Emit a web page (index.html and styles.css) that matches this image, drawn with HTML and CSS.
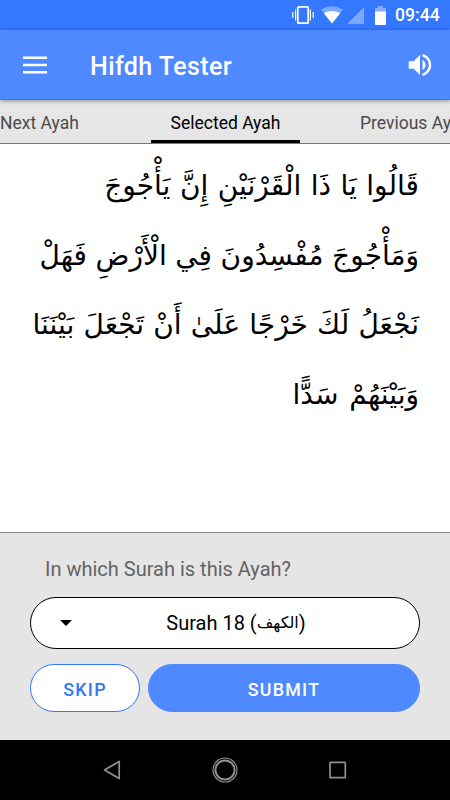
FILE: index.html
```html
<!DOCTYPE html>
<html lang="en">
<head>
    <meta charset="UTF-8">
    <meta name="viewport" content="width=device-width, initial-scale=1.0">
    <title>Hifdh Tester</title>
    <link rel="stylesheet" href="styles.css">
</head>
<body>
    <div class="status-bar">
        <svg class="vibrate" width="22" height="20" viewBox="0 0 22 20" fill="none" stroke="#fff">
            <rect x="5.8" y="1.8" width="10.4" height="16.4" rx="1" stroke-width="1.7"/>
            <path d="M3.6 4.5v11M18.4 4.5v11" stroke-width="1.2"/>
            <path d="M.8 7v6M21.2 7v6" stroke-width="1.2"/>
        </svg>
        <svg class="wifi" width="22" height="18" viewBox="0 0 22 18" fill="#fff">
            <path d="M0 3.5Q11-3 22 3.5L11 17.5z" opacity=".35"/>
            <path d="M2.8 7.3Q11 2.5 19.2 7.3L11 17.5z"/>
        </svg>
        <svg class="signal" width="17" height="17" viewBox="0 0 17 17" fill="#fff">
            <path d="M17 0v17H0z" opacity=".35"/>
        </svg>
        <svg class="battery" width="11" height="19" viewBox="0 0 11 19" fill="#fff">
            <path d="M3 0h5v2h3v4H0V2h3z" opacity=".4"/>
            <path d="M0 5.5h11V18a1 1 0 0 1-1 1H1a1 1 0 0 1-1-1z"/>
        </svg>
        <span class="clock">09:44</span>
    </div>

    <header class="toolbar">
        <svg width="24" height="18" viewBox="0 0 24 18" fill="#fff">
            <path d="M0 .5h24V3H0zM0 7.7h24v2.5H0zM0 14.9h24v2.5H0z"/>
        </svg>
        <h1>Hifdh Tester</h1>
        <svg class="volume" width="30" height="30" viewBox="0 0 24 24" fill="#fff">
            <path d="M3 9v6h4l5 5V4L7 9H3zm13.5 3c0-1.77-1.02-3.29-2.5-4.03v8.05c1.48-.73 2.5-2.25 2.5-4.02zM14 3.23v2.06c2.89.86 5 3.54 5 6.71s-2.11 5.85-5 6.71v2.06c4.01-.91 7-4.49 7-8.77s-2.99-7.86-7-8.77z"/>
        </svg>
    </header>

    <nav class="tabs">
        <a class="tab tab-next">Next Ayah</a>
        <a class="tab tab-selected">Selected Ayah</a>
        <a class="tab tab-previous">Previous Ayah</a>
    </nav>

    <main class="ayah" lang="ar" dir="rtl">
        <span class="line line-1">قَالُوا يَا ذَا الْقَرْنَيْنِ إِنَّ يَأْجُوجَ</span>
        <span class="line line-2">وَمَأْجُوجَ مُفْسِدُونَ فِي الْأَرْضِ فَهَلْ</span>
        <span class="line line-3">نَجْعَلُ لَكَ خَرْجًا عَلَىٰ أَنْ تَجْعَلَ بَيْنَنَا</span>
        <span class="line line-4">وَبَيْنَهُمْ سَدًّا</span>
    </main>

    <section class="question">
        <label>In which Surah is this Ayah?</label>
        <div class="select">
            <svg width="12" height="6" viewBox="0 0 12 6"><path d="M0 0h12L6 6z"/></svg>
            <span class="value">Surah 18 (<span class="surah-name" lang="ar">الكهف</span>)</span>
        </div>
        <div class="buttons">
            <button class="skip">SKIP</button>
            <button class="submit">SUBMIT</button>
        </div>
    </section>

    <footer class="nav-bar">
        <svg width="26" height="26" viewBox="0 0 26 26" fill="none" stroke="#909090" stroke-width="1.7" stroke-linejoin="round">
            <path d="M5.5 13L20.2 4.4v17.2z"/>
        </svg>
        <svg width="26" height="26" viewBox="0 0 26 26" fill="none" stroke="#909090">
            <circle cx="13" cy="13" r="12" stroke-width="1.2"/>
            <circle cx="13" cy="13" r="9.6" stroke-width="2"/>
        </svg>
        <svg width="26" height="26" viewBox="0 0 26 26" fill="none" stroke="#909090" stroke-width="1.7">
            <rect x="5" y="5.4" width="15.3" height="15.3" rx=".5"/>
        </svg>
    </footer>
</body>
</html>
```

FILE: styles.css
```css
* {
    box-sizing: border-box;
}
body {
    width: 450px;
    height: 800px;
    margin: 0;
    overflow: hidden;
    display: flex;
    flex-direction: column;
    font-family: Roboto, sans-serif;
    background: white;
}
.status-bar {
    height: 30px;
    display: flex;
    align-items: center;
    justify-content: flex-end;
    padding-right: 10px;
    background: #3478ff;
    color: white;
}
.wifi {
    margin-left: 7px;
}
.signal {
    margin-left: 4px;
}
.battery {
    margin-left: 11px;
}
.clock {
    width: 45px;
    margin-left: 9px;
    font-size: 17.6px;
    font-weight: 500;
}
.toolbar {
    position: relative;
    height: 70px;
    display: flex;
    align-items: center;
    padding: 0 15px 0 23px;
    background: #4e89ff;
    border-bottom: 1px solid #3b7af5;
    box-shadow: 0 1px 4px rgba(0, 0, 0, 0.4);
}
h1 {
    flex: 1;
    margin: 3px 0 0 43px;
    color: white;
    font-size: 25px;
    font-weight: 500;
    letter-spacing: 0.4px;
}
.tabs {
    height: 44px;
    display: grid;
    grid-template-columns: 151px 149px 150px;
    overflow: hidden;
    background: #e6e6e6;
    border-bottom: 1px solid #777;
}
.tab {
    height: 43px;
    line-height: 46px;
    font-size: 17.5px;
    white-space: nowrap;
    color: #4b4b4b;
}
.tab-selected {
    color: black;
    text-align: center;
    border-bottom: 3px solid black;
}
.tab-previous {
    padding-left: 60px;
    overflow: hidden;
}
.ayah {
    height: 388px;
    padding: 7px 31px 0 20px;
    font-family: "DejaVu Sans", sans-serif;
    font-size: 28px;
    color: black;
}
.line {
    display: block;
    height: 69.7px;
    line-height: 70px;
    white-space: nowrap;
}
.line-1 {
    word-spacing: 0.6px;
}
.line-2 {
    word-spacing: -0.3px;
}
.line-3 {
    word-spacing: 0.3px;
}
.line-4 {
    word-spacing: 2px;
}
.question {
    height: 208px;
    padding: 22px 30px 0;
    background: #e5e5e5;
    border-top: 1px solid #858585;
}
label {
    display: block;
    height: 28px;
    margin-left: 15px;
    line-height: 28px;
    font-size: 20px;
    color: #636363;
}
.select {
    height: 52px;
    margin-top: 14px;
    display: flex;
    align-items: center;
    padding: 0 29px;
    background: white;
    border: 1px solid black;
    border-radius: 26px;
}
.value {
    flex: 1;
    padding-left: 10px;
    text-align: center;
    font-size: 20px;
    color: black;
}
.surah-name {
    position: relative;
    top: -2px;
    font-family: "DejaVu Sans", sans-serif;
    font-size: 16px;
}
.buttons {
    display: flex;
    gap: 8px;
    margin-top: 15px;
}
button {
    height: 48px;
    padding: 2px 0 0;
    border: 1px solid #2f78ff;
    border-radius: 24px;
    font-family: Roboto, sans-serif;
    font-size: 17.8px;
    font-weight: 500;
    letter-spacing: 1.3px;
}
.skip {
    width: 110px;
    background: white;
    color: #2f78ff;
}
.submit {
    flex: 1;
    background: #4e89ff;
    border-color: #4e89ff;
    color: white;
}
.nav-bar {
    height: 60px;
    display: flex;
    align-items: center;
    justify-content: center;
    gap: 87px;
    background: black;
}
```
